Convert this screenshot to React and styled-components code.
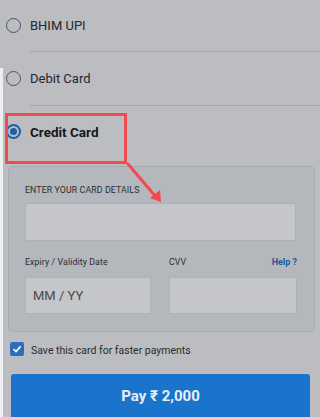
import React from "react";
import styled, { createGlobalStyle } from "styled-components";

const GlobalStyle = createGlobalStyle`
  html, body {
    margin: 0;
    padding: 0;
  }
  body {
    width: 320px;
    height: 417px;
    overflow: hidden;
    font-family: Roboto, "Liberation Sans", sans-serif;
    background: linear-gradient(to right, #eeeff0 3px, transparent 3px) 0 68px / 100% 100% no-repeat, #bbbdc1;
  }
`;

const Page = styled.div`
  display: flex;
  flex-direction: column;
  width: 320px;

  & > * {
    flex-shrink: 0;
  }
`;

const OptionRow = styled.div`
  position: relative;
  display: flex;
  align-items: ${(p) => (p.top ? "flex-start" : "center")};
  height: ${(p) => p.h}px;
  padding-left: 6px;
  padding-top: ${(p) => p.pt || 0}px;
  box-sizing: border-box;
`;

const Radio = styled.span`
  display: flex;
  align-items: center;
  justify-content: center;
  width: 15px;
  height: 15px;
  box-sizing: border-box;
  border-radius: 50%;
  border: ${(p) => (p.checked ? "2px solid #1d5ea6" : "1.5px solid #4f5257")};
  margin-right: 9px;

  &::after {
    content: "";
    display: ${(p) => (p.checked ? "block" : "none")};
    width: 7px;
    height: 7px;
    border-radius: 50%;
    background: #1d5ea6;
  }
`;

const OptionLabel = styled.span`
  font-size: ${(p) => (p.bold ? "13.5px" : "13px")};
  font-weight: ${(p) => (p.bold ? 700 : 400)};
  color: ${(p) => (p.bold ? "#15171a" : "#25272b")};
`;

const Divider = styled.div`
  height: 1px;
  margin-left: 30px;
  background: #a2a5aa;
`;

const Highlight = styled.div`
  position: absolute;
  left: 5px;
  top: 7px;
  width: 122px;
  height: 51px;
  box-sizing: border-box;
  border: 3px solid #f24b4d;
`;

const Arrow = styled.svg`
  position: absolute;
  left: 124px;
  top: 54px;
  overflow: visible;
`;

const Panel = styled.div`
  margin: 0 5px 0 8px;
  padding: 18px 18px 17px 16px;
  background: #b4b7bc;
  border: 1px solid #a7aaaf;
  border-radius: 5px;
  display: flex;
  flex-direction: column;
`;

const SmallLabel = styled.div`
  font-size: 8.8px;
  color: #2c2e32;
  letter-spacing: 0.1px;
  line-height: 11px;
`;

const Field = styled.div`
  display: flex;
  align-items: center;
  height: ${(p) => p.h}px;
  padding-left: 7px;
  box-sizing: border-box;
  background: #c4c6c9;
  border: 1px solid #adb0b4;
  border-radius: 2px;
  font-size: 13px;
  color: #484a4e;
`;

const Grid = styled.div`
  display: grid;
  grid-template-columns: 126px 128px;
  column-gap: 18px;
  margin-top: 14px;
`;

const LabelRow = styled.div`
  display: flex;
  justify-content: space-between;
  align-items: center;
  height: 14px;
  margin-bottom: 8px;
`;

const HelpLink = styled.span`
  font-size: 9px;
  font-weight: 700;
  color: #1d5b9e;
`;

const SaveRow = styled.div`
  display: flex;
  align-items: flex-start;
  height: 42px;
  padding-left: 10px;
  padding-top: 10px;
  box-sizing: border-box;
`;

const CheckBox = styled.span`
  display: flex;
  align-items: center;
  justify-content: center;
  width: 14px;
  height: 14px;
  border-radius: 2px;
  background: #2a6fbd;
  margin-right: 7px;
`;

const SaveText = styled.span`
  font-size: 10.5px;
  line-height: 14px;
  padding-top: 2px;
  color: #2a2c30;
`;

const PayButton = styled.div`
  display: flex;
  align-items: center;
  justify-content: center;
  margin: 0 10px 0 11px;
  height: 48px;
  padding-bottom: 4px;
  box-sizing: border-box;
  background: #1b74cb;
  border-radius: 3px 3px 0 0;
  color: #e8eef6;
  font-size: 15px;
  font-weight: 700;
`;

export default function App() {
  return (
    <Page>
      <GlobalStyle />
      <OptionRow h={51}>
        <Radio />
        <OptionLabel>BHIM UPI</OptionLabel>
      </OptionRow>
      <Divider />
      <OptionRow h={53}>
        <Radio />
        <OptionLabel>Debit Card</OptionLabel>
      </OptionRow>
      <Divider />
      <OptionRow h={60} top pt={18}>
        <Radio checked />
        <OptionLabel bold>Credit Card</OptionLabel>
        <Highlight />
        <Arrow width="40" height="42" viewBox="0 0 40 42">
          <line x1="4" y1="4" x2="32" y2="37" stroke="#f24b4d" strokeWidth="3" strokeLinecap="round" />
          <path d="M26 38 L37 42 L36 30 Z" fill="#f24b4d" />
        </Arrow>
      </OptionRow>
      <Panel>
        <SmallLabel>ENTER YOUR CARD DETAILS</SmallLabel>
        <Field h={38} style={{ marginTop: 7 }} />
        <Grid>
          <div>
            <LabelRow>
              <SmallLabel>Expiry / Validity Date</SmallLabel>
            </LabelRow>
            <Field h={37}>MM / YY</Field>
          </div>
          <div>
            <LabelRow>
              <SmallLabel>CVV</SmallLabel>
              <HelpLink>Help ?</HelpLink>
            </LabelRow>
            <Field h={37} />
          </div>
        </Grid>
      </Panel>
      <SaveRow>
        <CheckBox>
          <svg width="10" height="10" viewBox="0 0 10 10">
            <path d="M1.5 5.2 L4 7.6 L8.6 2.4" fill="none" stroke="#fff" strokeWidth="1.6" />
          </svg>
        </CheckBox>
        <SaveText>Save this card for faster payments</SaveText>
      </SaveRow>
      <PayButton>Pay ₹ 2,000</PayButton>
    </Page>
  );
}
